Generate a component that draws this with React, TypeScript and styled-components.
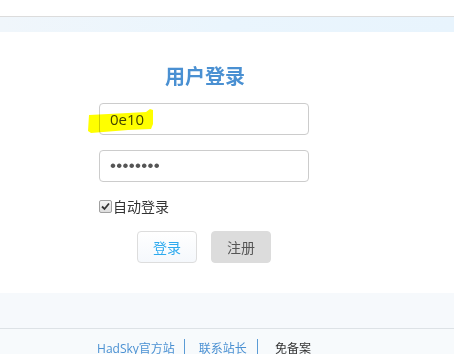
import React from "react";
import styled, { createGlobalStyle } from "styled-components";

const GlobalStyle = createGlobalStyle`
  html, body { margin: 0; padding: 0; background: #fff; }
  body { font-family: "Open Sans", "Noto Sans CJK SC", sans-serif; color: #333; }
  * { box-sizing: border-box; }
`;

const Page = styled.div`
  width: 454px;
  height: 354px;
  overflow: hidden;
  display: flex;
  flex-direction: column;

  & > * { flex-shrink: 0; }
`;

const TopGap = styled.div`
  height: 16px;
  background: #fff;
`;

const TopBar = styled.div`
  height: 16px;
  border-top: 1px solid #dcdcdc;
  background: linear-gradient(to right, #f0f6fb, #eaf5fd 50%, #e8f4fd);
`;

const Main = styled.main`
  padding: 30px 0 30px;
  background: #fff;
`;

const Column = styled.div`
  width: 408px;
  display: flex;
  flex-direction: column;
  align-items: center;
`;

const Title = styled.h1`
  margin: 0;
  font-size: 20px;
  line-height: 28px;
  font-weight: 700;
  color: #4a90d2;
  font-family: "Noto Sans CJK SC", sans-serif;
  transform: translateX(1px);
`;

const Form = styled.form`
  width: 210px;
  margin: 13px 0 0;
  display: flex;
  flex-direction: column;
`;

const Field = styled.div<{ $gap?: number }>`
  position: relative;
  margin-top: ${(p) => p.$gap ?? 0}px;
`;

const Input = styled.input`
  display: block;
  width: 210px;
  height: 32px;
  padding: 0 10px;
  border: 1px solid #cccccc;
  border-radius: 4px;
  background: #fff;
  font-family: "Open Sans", "Noto Sans CJK SC", sans-serif;
  font-size: 15px;
  color: #444;
  outline: none;

  &[type="password"] {
    font-family: "Liberation Sans", sans-serif;
    font-size: 17px;
    letter-spacing: 0.3px;
    color: #555;
  }
`;

const Marker = styled.svg`
  position: absolute;
  left: -11px;
  top: 3px;
  width: 66px;
  height: 28px;
  mix-blend-mode: multiply;
  pointer-events: none;
`;

const CheckRow = styled.label`
  display: flex;
  align-items: center;
  margin-top: 14px;
  height: 20px;
  font-size: 14px;
  color: #333;
  font-family: "Noto Sans CJK SC", sans-serif;
`;

const Box = styled.span`
  width: 13px;
  height: 13px;
  border: 1px solid #a0a0a0;
  border-radius: 2px;
  background: linear-gradient(#f4f4f4, #dedede);
  display: inline-flex;
  align-items: center;
  justify-content: center;
  margin-right: 1px;
`;

const Buttons = styled.div`
  display: flex;
  justify-content: center;
  gap: 14px;
  margin-top: 15px;
`;

const Button = styled.button<{ $primary?: boolean }>`
  width: 60px;
  height: 32px;
  border-radius: 4px;
  font-size: 14px;
  font-family: "Noto Sans CJK SC", sans-serif;
  cursor: pointer;
  border: 1px solid ${(p) => (p.$primary ? "#dddddd" : "#dcdcdc")};
  background: ${(p) => (p.$primary ? "linear-gradient(#ffffff, #f5f8fc)" : "#dcdcdc")};
  color: ${(p) => (p.$primary ? "#2eaaee" : "#555555")};
`;

const Band = styled.div`
  height: 36px;
  background: #f6f9fc;
  border-bottom: 1px solid #dde2e6;
`;

const Footer = styled.footer`
  flex: 1;
  background: #f7fafc;
  padding-top: 10px;
`;

const Links = styled.div`
  width: 408px;
  display: flex;
  justify-content: center;
  align-items: flex-start;
  font-size: 12px;
  line-height: 20px;
  font-family: "Open Sans", "Noto Sans CJK SC", sans-serif;
`;

const Link = styled.a<{ $plain?: boolean }>`
  color: ${(p) => (p.$plain ? "#333" : "#4a90d2")};
  text-decoration: none;
`;

const Sep = styled.span<{ $left: number; $right: number }>`
  width: 1px;
  height: 16px;
  background: #5b9bd5;
  margin: 0 ${(p) => p.$right}px 0 ${(p) => p.$left}px;
`;

export default function App() {
  return (
    <Page>
      <GlobalStyle />
      <TopGap />
      <TopBar />
      <Main>
        <Column>
          <Title>用户登录</Title>
          <Form onSubmit={(e) => e.preventDefault()}>
            <Field>
              <Input type="text" defaultValue="0e10" />
              <Marker viewBox="0 0 66 28">
                <polygon
                  points="1,9 40,7 58,6 62,3 65,4 65,18 63,23 40,24 3,27 0,25"
                  fill="#ffff00"
                />
              </Marker>
            </Field>
            <Field $gap={15}>
              <Input type="password" defaultValue="12345678" />
            </Field>
            <CheckRow>
              <Box>
                <svg width="9" height="9" viewBox="0 0 9 9">
                  <path d="M1 4.5 L3.5 7 L8 1.5" stroke="#333" strokeWidth="1.8" fill="none" />
                </svg>
              </Box>
              自动登录
            </CheckRow>
            <Buttons>
              <Button $primary type="submit">登录</Button>
              <Button type="button">注册</Button>
            </Buttons>
          </Form>
        </Column>
      </Main>
      <Band />
      <Footer>
        <Links>
          <Link href="#">HadSky官方站</Link>
          <Sep $left={9} $right={14} />
          <Link href="#">联系站长</Link>
          <Sep $left={10} $right={17} />
          <Link $plain>免备案</Link>
        </Links>
      </Footer>
    </Page>
  );
}
